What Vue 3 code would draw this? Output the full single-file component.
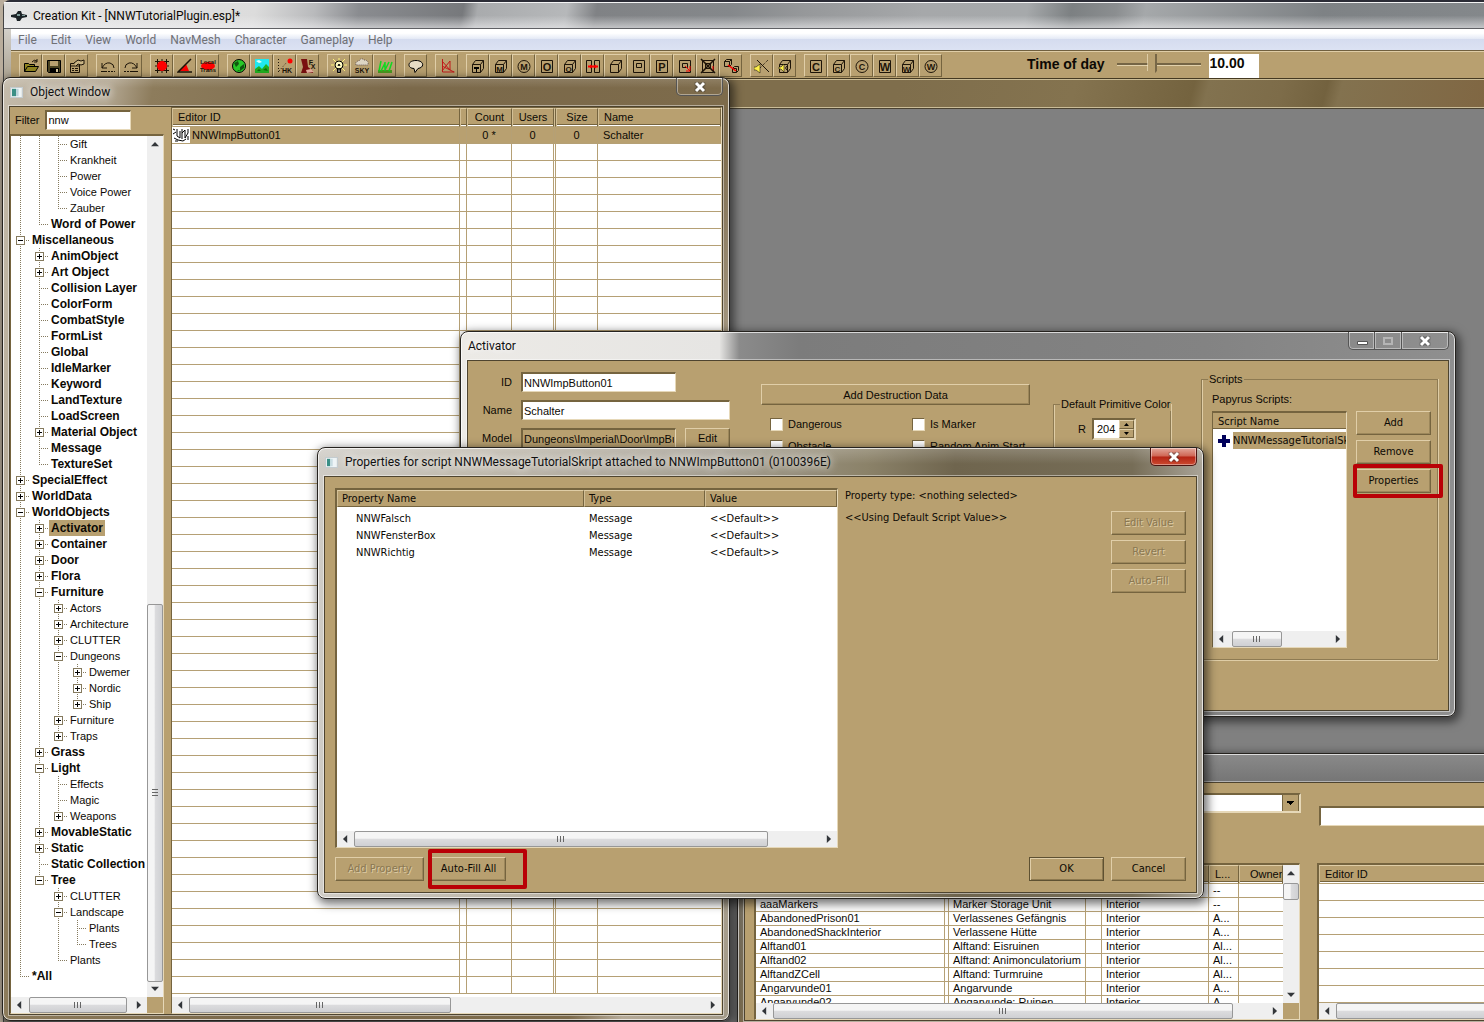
<script setup>
import { h } from 'vue'

const menus = ['File', 'Edit', 'View', 'World', 'NavMesh', 'Character', 'Gameplay', 'Help']

const cube = '<path class="k" d="M2.5 6.5h8v8h-8zM2.5 6.5l3-4h8l-3 4M13.5 2.5v8l-3 4"/>'
const square = '<path class="k" d="M2.5 2.5h11v12h-11z"/>'
const circle = '<circle class="k" cx="8" cy="8.500" r="6"/>'
const cubeLetter = (c) => cube + `<text x="6.500" y="13.500" font-size="8">${c}</text>`
const squareLetter = (c) => square + `<text x="8" y="12.500" font-size="11">${c}</text>`
const circleLetter = (c) => circle + `<text x="8" y="11.500" font-size="9">${c}</text>`

const toolGroups = [
  [
    { name: 'Open', art: '<path fill="#8f8420" stroke="#000" d="M1.500 13.500v-8h4l1 1h5v2M1.500 13.500l3-5h11l-3 5z"/><path class="k" d="M9 4q2-3 5-1M14 1v3h-3"/>' },
    { name: 'Save', art: '<path fill="#4a4322" stroke="#000" d="M1.500 2.500h13v12h-12l-1-1z"/><path fill="#b8a070" d="M4 3h8v5H4z"/><path fill="#000" d="M4 10h9v5H4z"/><path fill="#d8c8a0" d="M10 11h2v3h-2z"/>' },
    { name: 'Preferences', art: '<path class="k" d="M1.500 5.500h9v9h-9zM1.500 8h9M3 10.500h2M6 10.500h3M3 12.500h2M6 12.500h3"/><path fill="#c9b484" stroke="#1d1408" d="M5 5l4-3 3 1 3-1v4l-3 1-3-1-2 2"/>' }
  ],
  [
    { name: 'Undo', art: '<path class="k" d="M2 5v5h5M2 10q3-6 8-5 4 1 4 5"/><path class="k" stroke-dasharray="2 1" d="M5 13.500h10"/><path class="k" d="M1 13.500h6"/>' },
    { name: 'Redo', art: '<path class="k" d="M14 5v5h-5M14 10q-3-6-8-5-4 1-4 5"/><path class="k" stroke-dasharray="2 1" d="M1 13.500h8"/><path class="k" d="M8 13.500h7"/>' }
  ],
  [
    { name: 'Snap to grid', art: '<path class="k" d="M3.500 1v14M12.500 1v14M1 3.500h14M1 12.500h14M8 1v14M1 8h14"/><circle cx="8" cy="8" r="5" fill="#f00"/>' },
    { name: 'Snap to angle', art: '<path fill="#f00" d="M2 13L9 6l3 7z"/><path class="k" stroke-width="1.500" d="M14 1L1 14h14"/>' },
    { name: 'Local transform', art: '<ellipse cx="8" cy="8" rx="7" ry="4" fill="#f00"/><text x="8" y="6" font-size="6">Local</text><text x="8" y="14" font-size="6">Trans</text>' }
  ],
  [
    { name: 'World', art: '<circle cx="8" cy="8" r="6.500" fill="#28c828" stroke="#000"/><path d="M3 5l4-2 1 3-3 3zM9 9l4-3v4l-4 3zM6 13l2-1 1 1z" fill="#105810"/>' },
    { name: 'Landscape', art: '<path fill="#20e8f0" d="M1 1h14v14H1z"/><path fill="#e0fff8" d="M2 3l3-1 3 2-3 1z"/><path fill="#20b020" d="M1 11l4-3 3 3 4-5 3 3v6H1z"/><path fill="#106810" d="M3 13l2-2 2 2zM9 12l3-2 2 3z"/>' },
    { name: 'Havok', art: '<path class="k" stroke-dasharray="1 2" d="M1.500 1v14M2 13l8-9"/><circle cx="13" cy="3" r="2.500" fill="#f00"/><text x="10" y="14.500" font-size="7">HK</text>' },
    { name: 'Effects', art: '<path fill="#7a1010" d="M1 1h6l1 8 5 4v2H1l2-6z"/><path fill="#e8b0a0" d="M6 12l5-1 3 3-7 1z"/><text x="11" y="6.500" font-size="7">F</text><text x="13" y="11" font-size="7">X</text>' }
  ],
  [
    { name: 'Light', art: '<path stroke="#fff47a" fill="none" d="M8 0v16M0 7h16M2 1l12 12M14 1L2 13"/><circle cx="8" cy="7" r="4" fill="#fffac0" stroke="#000"/><path fill="#777" stroke="#000" d="M6.500 11h3v3.500h-3zM7 8l1-2 1 2"/>' },
    { name: 'Sky', art: '<path fill="#ddd5c4" stroke="#655" stroke-dasharray="1 1" d="M2 7q-1-4 3-4 2-4 5-1 5 0 4 5z"/><text x="8" y="15" font-size="7">SKY</text>' },
    { name: 'Grass', art: '<path fill="#4a9a20" d="M1 12h14v3H1z"/><path stroke="#10d820" fill="none" stroke-width="1.500" d="M2 13l2-10M4 13l4-8M8 13V4M8 12l4-8M12 13l3-9"/>' }
  ],
  [{ name: 'Dialogue', art: '<path fill="#e8dcc4" stroke="#000" d="M8 2.500c-9 0-9 8-2 8l1 4 3-4c7-1 6-8-2-8z"/>' }],
  [{ name: 'Navmesh', art: '<path fill="none" stroke="#c01818" d="M3.500 1v13h12M3 8l12 6M3 13L11 3v9M3 3l8 9"/>' }],
  [
    { name: 'Triggers', art: cube + '<path fill="#000" d="M4 9h5v2H7v3H6v-3H4z"/>' },
    { name: 'Multibound', art: cubeLetter('M') },
    { name: 'Marker sphere', art: circleLetter('M') },
    { name: 'Occlusion plane', art: squareLetter('O') },
    { name: 'Occlusion cube', art: cubeLetter('O') },
    { name: 'Portal link', art: '<path class="k" d="M1.500 2.500h5v12h-5zM9.500 2.500h5v12h-5z"/><path stroke="#f00" stroke-width="2" d="M3 8.500h10"/><path fill="#f00" d="M5 6.500v4l3-2zM11 6.500v4l-3-2z"/>' },
    { name: 'Room bound', art: cube },
    { name: 'Plane', art: square + '<path class="k" d="M5.500 5.500h5v4h-5z"/>' },
    { name: 'Portal', art: squareLetter('P') },
    { name: 'Link plane', art: square + '<path class="k" d="M5.500 5.500h5v4h-5z"/><path fill="none" stroke="#f00" d="M8 8l5 5M13 8v5H9"/>' },
    { name: 'Unlink plane', art: square + '<path class="k" d="M5.500 5.500h5v5h-5z"/><path fill="none" stroke="#f00" d="M8 8l5 5M13 8v5"/><path class="k" stroke-width="1.500" d="M1 1l14 14M15 1L1 15"/>' },
    { name: 'Link cubes', art: '<path class="k" d="M1.500 3.500h5v5h-5zM1.500 3.500l2-2h5l-2 2M8.500 1.500v5l-2 2M9.500 10.500h4v4h-4zM9.500 10.500l2-2h4v4l-2 2"/><path stroke="#f00" stroke-width="1.500" d="M5 7l8 6"/>' }
  ],
  [
    { name: 'Sound plane', art: '<path class="k" d="M3 2l12 12"/><path class="k" stroke-dasharray="1 1" d="M14 2L5 11"/><path fill="#fff04a" stroke="#000" stroke-width=".5" d="M0 9h2l4-3v9l-4-3H0z"/>' },
    { name: 'Sound cube', art: cube + '<path fill="#fff04a" stroke="#000" stroke-width=".5" d="M2 9h2l3-3v8l-3-3H2z"/><path class="k" d="M10 8q-3 2 0 4"/>' }
  ],
  [
    { name: 'Collision plane', art: squareLetter('C') },
    { name: 'Collision cube', art: cubeLetter('C') },
    { name: 'Collision sphere', art: circleLetter('C') },
    { name: 'Water plane', art: squareLetter('W') },
    { name: 'Water cube', art: cubeLetter('W') },
    { name: 'Water sphere', art: circleLetter('W') }
  ]
]

// Each line: depth, expander sign, label
const outline = `2 Gift
2 Krankheit
2 Power
2 Voice Power
2 Zauber
1 Word of Power
0-Miscellaneous
1+AnimObject
1+Art Object
1 Collision Layer
1 ColorForm
1 CombatStyle
1 FormList
1 Global
1 IdleMarker
1 Keyword
1 LandTexture
1 LoadScreen
1+Material Object
1 Message
1 TextureSet
0+SpecialEffect
0+WorldData
0-WorldObjects
1+Activator
1+Container
1+Door
1+Flora
1-Furniture
2+Actors
2+Architecture
2+CLUTTER
2-Dungeons
3+Dwemer
3+Nordic
3+Ship
2+Furniture
2+Traps
1+Grass
1-Light
2 Effects
2 Magic
2+Weapons
1+MovableStatic
1+Static
1 Static Collection
1-Tree
2+CLUTTER
2-Landscape
3 Plants
3 Trees
2 Plants
0 *All`.split('\n').map((s) => ({ depth: +s[0], sign: s[1].trim(), label: s.slice(2) }))

function continues(i, level) {
  for (let j = i + 1; j < outline.length; j++) {
    if (outline[j].depth < level) return false
    if (outline[j].depth === level) return true
  }
  return false
}

const tree = outline.map((n, i) => {
  let d = ''
  for (let l = 0; l < n.depth; l++) if (continues(i, l)) d += `M${9 + 19 * l}.5 0V16`
  const x = 9 + 19 * n.depth
  d += `M${x}.5 0V${continues(i, n.depth) ? 16 : 8}M${x} 8.5H${x + 10}`
  return { ...n, d, x, bold: n.depth < 2, selected: n.label === 'Activator' }
})

const properties = ['NNWFalsch', 'NNWFensterBox', 'NNWRichtig']

const cells = [
  ['', '', '--'],
  ['aaaMarkers', 'Marker Storage Unit', '--'],
  ['AbandonedPrison01', 'Verlassenes Gefängnis', 'A...'],
  ['AbandonedShackInterior', 'Verlassene Hütte', 'A...'],
  ['Alftand01', 'Alftand: Eisruinen', 'Al...'],
  ['Alftand02', 'Alftand: Animonculatorium', 'Al...'],
  ['AlftandZCell', 'Alftand: Turmruine', 'Al...'],
  ['Angarvunde01', 'Angarvunde', 'A...'],
  ['Angarvunde02', 'Angarvunde: Ruinen', 'A...']
]

const ScrollBar = (p) => {
  const side = p.vertical ? 'top' : 'left'
  const extent = p.vertical ? 'height' : 'width'
  return h('div', { class: ['sb', p.vertical ? 'sb-v' : 'sb-h'] }, [
    h('i', { class: 'sb-arrow back' }),
    h('div', { class: 'sb-track' }, [
      h('div', { class: 'sb-thumb', style: { [side]: p.start + '%', [extent]: p.size + '%' } }, p.plain ? [] : [h('b')])
    ]),
    h('i', { class: 'sb-arrow' })
  ])
}
ScrollBar.props = ['vertical', 'start', 'size', 'plain']
</script>

<template>
  <div class="desktop">
    <main class="kit">
      <header class="kit-title">
        <svg width="16" height="12" viewBox="0 0 16 12"><path fill="#1b2226" d="M0 5l5-1 2-3h3l1 3 5 1v2l-5 1-2 3H6L5 8 0 7z" /><path fill="#7d9a98" d="M6 4h3v2H6zM11 5h3v1h-3z" /></svg>
        <span>Creation Kit - [NNWTutorialPlugin.esp]*</span>
      </header>
      <nav class="menu"><a v-for="m in menus" :key="m" href="#">{{ m }}</a></nav>
      <div class="toolbar">
        <div v-for="(g, i) in toolGroups" :key="i" class="tools">
          <button v-for="t in g" :key="t.name" class="tool" :aria-label="t.name">
            <svg class="art" width="16" height="16" viewBox="0 0 16 16" v-html="t.art"></svg>
          </button>
        </div>
        <label class="tod" for="tod">Time of day</label>
        <input id="tod" class="slider" type="range" min="0" max="24" value="10" />
        <input class="tod-value" value="10.00" aria-label="Hour" />
      </div>
      <section class="render"><header class="render-title"></header></section>
    </main>

    <section class="win cellview">
      <header class="title"></header>
      <div class="client cell-client">
        <div class="cell-left">
          <div class="cell-top"><select class="combo" aria-label="World space"><option></option></select></div>
          <div class="box">
            <div class="box-row">
              <div class="clip">
                <table class="grid small">
                  <colgroup><col class="c189" /><col class="c4" /><col class="c137" /><col class="c16" /><col class="c107" /><col class="c30" /><col /></colgroup>
                  <thead><tr><th></th><th></th><th></th><th></th><th></th><th>L...</th><th class="own">Owner</th></tr></thead>
                  <tbody>
                    <tr v-for="(c, i) in cells" :key="i"><td>{{ c[0] }}</td><td></td><td>{{ c[1] }}</td><td></td><td>Interior</td><td>{{ c[2] }}</td><td></td></tr>
                  </tbody>
                </table>
              </div>
              <ScrollBar :vertical="true" :start="1" :size="14" :plain="true" />
            </div>
            <div class="box-foot"><ScrollBar :start="0" :size="93" /><i class="corner"></i></div>
          </div>
        </div>
        <div class="cell-right">
          <div class="cell-top second"><input class="field" aria-label="Cell" /></div>
          <div class="box">
            <div class="clip">
              <table class="grid">
                <thead><tr><th>Editor ID</th></tr></thead>
                <tbody><tr v-for="n in 8" :key="n"><td></td></tr></tbody>
              </table>
            </div>
            <ScrollBar :start="0" :size="96" />
          </div>
        </div>
      </div>
    </section>

    <section class="win objects">
      <header class="title">
        <svg class="app" width="13" height="11" viewBox="0 0 13 11"><path fill="#eef4f6" d="M0 0h13v11H0z" /><path fill="#3a8f86" d="M1 1h5v9H1z" /><path fill="#b9d3da" d="M6 1h3v9H6z" /></svg>
        <span>Object Window</span>
        <button class="cap single" aria-label="Close"><svg width="12" height="10" viewBox="0 0 12 10"><path class="x" d="M2 1l8 8M10 1L2 9" /></svg></button>
      </header>
      <div class="client obj-client">
        <aside class="side">
          <div class="filter"><label for="filter">Filter</label><input id="filter" class="field" value="nnw" /></div>
          <div class="box tree-box">
            <div class="box-row">
              <ul class="tree">
                <li v-for="(n, i) in tree" :key="i" :class="{ bold: n.bold }">
                  <svg :width="19 * (n.depth + 1)" height="16">
                    <path class="dots" :d="n.d" />
                    <g v-if="n.sign" class="exp">
                      <rect :x="n.x - 4 + 0.5" y="4.5" width="8" height="8" />
                      <path :d="`M${n.x - 2} 8.5h5` + (n.sign === '+' ? `M${n.x + 0.5} 6v5` : '')" />
                    </g>
                  </svg>
                  <span :class="{ sel: n.selected }">{{ n.label }}</span>
                </li>
              </ul>
              <ScrollBar :vertical="true" :start="54.500" :size="45.500" />
            </div>
            <div class="box-foot"><ScrollBar :start="1" :size="94" /><i class="corner"></i></div>
          </div>
        </aside>
        <div class="box list">
          <div class="clip">
            <table class="grid">
              <colgroup><col class="c288" /><col class="c7" /><col class="c45" /><col class="c42" /><col class="c2" /><col class="c42" /><col /></colgroup>
              <thead><tr><th>Editor ID</th><th></th><th class="mid">Count</th><th class="mid">Users</th><th></th><th class="mid">Size</th><th>Name</th></tr></thead>
              <tbody>
                <tr class="picked">
                  <td class="id"><svg width="18" height="16" viewBox="0 0 18 16"><path fill="#fff" d="M0 0h18v16H0z" /><path fill="none" stroke="#000" d="M1 2l2 1M1 7l3-2M5 2v7l3 2V4M10 2v10M10 6l3-3v8l3-5V2M2 11l4 2 5 1 3-2M16 9v4M3 14h3" /></svg>NNWImpButton01</td>
                  <td></td><td class="mid">0 *</td><td class="mid">0</td><td></td><td class="mid">0</td><td>Schalter</td>
                </tr>
                <tr v-for="n in 50" :key="n"><td></td><td></td><td></td><td></td><td></td><td></td><td></td></tr>
              </tbody>
            </table>
          </div>
          <ScrollBar :start="0" :size="50.500" />
        </div>
      </div>
    </section>

    <section class="win activator">
      <header class="title">
        <span>Activator</span>
        <div class="caps">
          <button class="cap" aria-label="Minimize"><svg width="12" height="10" viewBox="0 0 12 10"><path fill="#fff" stroke="#555" d="M1.500 5.500h10v3h-10z" /></svg></button>
          <button class="cap" aria-label="Maximize"><svg width="12" height="10" viewBox="0 0 12 10"><path fill="none" stroke="#b5b5b5" stroke-width="2" d="M2 2h8v6H2z" /></svg></button>
          <button class="cap wide" aria-label="Close"><svg width="12" height="10" viewBox="0 0 12 10"><path class="x" d="M2 1l8 8M10 1L2 9" /></svg></button>
        </div>
      </header>
      <div class="client act-client">
        <div class="form">
          <label for="aid">ID</label><input id="aid" class="field" value="NNWImpButton01" />
          <label for="aname">Name</label><input id="aname" class="field full" value="Schalter" />
          <label for="amodel">Model</label><input id="amodel" class="field tan" value="Dungeons\Imperial\Door\ImpButton" readonly />
          <button class="btn">Edit</button>
        </div>
        <div class="middle">
          <button class="btn">Add Destruction Data</button>
          <div class="checks">
            <label><input type="checkbox" />Dangerous</label>
            <label><input type="checkbox" />Is Marker</label>
            <label><input type="checkbox" />Obstacle</label>
            <label><input type="checkbox" />Random Anim Start</label>
          </div>
        </div>
        <fieldset class="group color">
          <legend>Default Primitive Color</legend>
          <div class="spin"><label for="red">R</label>
            <div class="spinner"><input id="red" value="204" /><div class="steps"><button aria-label="Up"><i class="up"></i></button><button aria-label="Down"><i class="down"></i></button></div></div>
          </div>
        </fieldset>
        <fieldset class="group scripts">
          <legend>Scripts</legend>
          <p>Papyrus Scripts:</p>
          <div class="scripts-row">
            <div class="box script-box">
              <div class="clip">
                <div class="list-head">Script Name</div>
                <div class="script"><svg width="12" height="12" viewBox="0 0 12 12"><path fill="#00005a" d="M4 0h4v4h4v4H8v4H4V8H0V4h4z" /></svg><span>NNWMessageTutorialSkript</span></div>
              </div>
              <ScrollBar :start="2" :size="49" />
            </div>
            <div class="stack">
              <button class="btn">Add</button>
              <button class="btn">Remove</button>
              <div class="marked"><button class="btn">Properties</button><i class="mark mark-a"></i></div>
            </div>
          </div>
        </fieldset>
      </div>
    </section>

    <section class="win props">
      <header class="title">
        <svg class="app" width="13" height="11" viewBox="0 0 13 11"><path fill="#eef4f6" d="M0 0h13v11H0z" /><path fill="#3a8f86" d="M1 1h4v9H1z" /><path fill="#c9dde2" d="M5 1h3v9H5z" /></svg>
        <span>Properties for script NNWMessageTutorialSkript attached to NNWImpButton01 (0100396E)</span>
        <button class="cap single red" aria-label="Close"><svg width="12" height="10" viewBox="0 0 12 10"><path class="x" d="M2 1l8 8M10 1L2 9" /></svg></button>
      </header>
      <div class="client props-client">
        <div class="props-body">
          <div class="box props-box">
            <div class="clip">
              <table class="grid plain">
                <colgroup><col class="c247" /><col class="c121" /><col /></colgroup>
                <thead><tr><th>Property Name</th><th>Type</th><th>Value</th></tr></thead>
                <tbody><tr v-for="p in properties" :key="p"><td class="indent">{{ p }}</td><td>Message</td><td>&lt;&lt;Default&gt;&gt;</td></tr></tbody>
              </table>
            </div>
            <ScrollBar :start="0" :size="88.500" />
          </div>
          <div class="detail">
            <p>Property type: &lt;nothing selected&gt;</p>
            <div class="detail-row">
              <p>&lt;&lt;Using Default Script Value&gt;&gt;</p>
              <div class="stack">
                <button class="btn" disabled>Edit Value</button>
                <button class="btn" disabled>Revert</button>
                <button class="btn" disabled>Auto-Fill</button>
              </div>
            </div>
          </div>
        </div>
        <footer class="actions">
          <button class="btn add" disabled>Add Property</button>
          <div class="marked"><button class="btn">Auto-Fill All</button><i class="mark mark-b"></i></div>
          <button class="btn ok">OK</button>
          <button class="btn">Cancel</button>
        </footer>
      </div>
    </section>
  </div>
</template>

<style>
html, body { margin: 0; overflow: hidden; }
</style>

<style scoped>
* { box-sizing: border-box; }
.desktop {
  position: relative; height: 100vh; overflow: hidden; background: #b9ad9c;
  font: 11px/14px "Liberation Sans", Arial, sans-serif; color: #0c0904;
}
button, input, select { font: inherit; color: inherit; margin: 0; padding: 0; border: 0; border-radius: 0; outline: 0; background: none; }
p { margin: 0; }

/* main frame */
.kit { margin-left: 3px; height: 100%; padding-left: 7px; display: flex; flex-direction: column; border-top: 2px solid #2b2c36; border-left: 1px solid #444; border-top-left-radius: 7px; background: linear-gradient(#e8e8e8, #a9a08e 80px, #8b8474); }
.kit-title {
  height: 27px; flex: none; display: flex; align-items: center; gap: 6px; margin-left: -7px; padding-left: 7px;
  border-top: 1px solid #f4f4f4; border-bottom: 1px solid #5f6064;
  font: 12px/16px Roboto, "Open Sans", sans-serif;
  background: linear-gradient(transparent 50%, rgba(240, 240, 242, .6)),
    linear-gradient(100deg, #e4e4e4 0, #dcdcdc 17%, #b9babc 21%, #8a8c90 24%, #77797c 31%, #a9abad 32%, #b6b8ba 38%, #808285 40%, #85888b 49%, #96989a 54%, #a6a8aa 62%, #a6a9ab 69%, #7c8082 72%, #8b8e90 75%, #a5a8aa 77%, #7e8285 89%, #84888b 100%);
}
.menu { height: 21px; flex: none; display: flex; gap: 14px; align-items: center; padding-left: 7px; background: linear-gradient(#fff 20%, #e6ebf6 45%, #d5dcef 50%, #dce2f3); }
.menu a { font: 12px/16px Roboto, "Open Sans", sans-serif; color: #6f7075; text-decoration: none; }
.toolbar { height: 29px; flex: none; display: flex; align-items: flex-start; gap: 8px; padding: 3px 0 0 8px; background: #b8a070; border-top: 1px solid #70603f; border-bottom: 1px solid #453a22; box-shadow: inset 0 1px #dfcda6; }
.tools { display: flex; }
.tool { width: 23px; height: 23px; display: grid; place-items: center; border: 1px solid; border-color: #e0cea8 #75643f #75643f #e0cea8; background: #b8a070; }
.art :deep(.k) { fill: none; stroke: #1d1408; }
.art :deep(text) { font-weight: 700; text-anchor: middle; fill: #1d1408; }
.tod { margin-left: 77px; font: bold 14px/20px "Liberation Sans", Arial, sans-serif; }
.slider { appearance: none; width: 84px; height: 22px; margin-left: 4px; background: linear-gradient(#756545 0 2px, #e2d1ab 2px 3px) 0 9px / 100% 3px no-repeat; }
.slider::-webkit-slider-thumb { appearance: none; width: 10px; height: 22px; background: linear-gradient(90deg, #f3e6c6 0 1px, #b8a070 1px 8px, #776747 8px); clip-path: polygon(0 0, 100% 0, 100% 75%, 50% 100%, 0 75%); }
.tod-value { width: 50px; height: 24px; padding: 0 1px 6px; background: #fff; font: bold 14px/18px "Liberation Sans", Arial, sans-serif; }
.render { flex: 1; background: #808080; }
.render-title { height: 30px; border-top: 1px solid #cbbd98; border-bottom: 1px solid #4a4232; box-shadow: inset 0 -1px #cbbd98; background: linear-gradient(105deg, #7f6e4c 60%, #84734f 72%, #74633f 80%, #82724f 81%, #7d6c49 86%, #73623f 89%, #83724f 90%, #806743 100%); }

/* windows */
.win { position: absolute; display: flex; flex-direction: column; padding: 0 6px 5px; border: 1px solid #25221e; border-radius: 8px; box-shadow: inset 0 0 0 1px rgba(255, 255, 255, .7), 2px 3px 10px 2px rgba(0, 0, 0, .55); }
.title { flex: none; height: 28px; display: flex; align-items: center; gap: 7px; padding-left: 1px; font: 12px/16px Roboto, "Open Sans", sans-serif; color: #101010; white-space: nowrap; }
.title span { text-shadow: 0 0 8px #fff, 0 0 10px rgba(255, 255, 255, .8); }
.client { flex: 1; min-height: 0; border: 1px solid #4e442f; background: #b8a070; box-shadow: 0 0 0 1px rgba(255, 255, 255, .45); }
.app { border: 1px solid #c4ccd0; }
.cap { height: 18px; width: 27px; display: grid; place-items: center; border: 1px solid #555; border-top: 0; box-shadow: inset 0 0 0 1px rgba(255, 255, 255, .4); }
.single, .wide { width: 47px; }
.single { margin: 0 0 auto auto; border-radius: 0 0 5px 5px; }
.caps { display: flex; margin: 0 0 auto auto; }
.caps .cap + .cap { border-left: 0; }
.cap:first-child { border-bottom-left-radius: 5px; }
.wide { border-bottom-right-radius: 5px; }
.cap .x { stroke: #fff; stroke-width: 3; fill: none; filter: drop-shadow(0 0 1px #222); }
.cap.red { border-color: #4c1410; background: linear-gradient(#e3a79a, #cf6553 48%, #b52414 52%, #cb4a30); }

/* sunken box and grid */
.box { display: flex; flex-direction: column; min-width: 0; min-height: 0; background: #fff; border: 2px solid #75643f; border-right: 1px solid #e6d8b8; border-bottom: 1px solid #e6d8b8; }
.box-row { flex: 1; display: flex; min-height: 0; }
.clip { flex: 1; min-width: 0; min-height: 0; overflow: hidden; }
.box-foot { display: flex; flex: none; }
.box-foot > .sb { flex: 1; }
.corner { width: 16px; background: #b8a070; }
.grid { width: 100%; table-layout: fixed; border-collapse: separate; border-spacing: 0; }
.grid th { height: 19px; padding: 0 5px; line-height: 15px; font-weight: 400; text-align: left; background: linear-gradient(#b8a070 0 15px, #75643f 15px 16px, #fff 16px); border: 1px solid; border-color: #dfcda6 #75643f #b5a075 #d2bf96; overflow: hidden; white-space: nowrap; }
.grid td { height: 17px; padding: 0 5px; line-height: 16px; border-right: 1px solid #b5a075; border-bottom: 1px solid #b5a075; overflow: hidden; white-space: nowrap; }
.grid td:last-child { border-right: 0; }
.grid .mid { text-align: center; padding: 0; }
.picked td { background: #b8a070; }
.grid .id { padding-left: 0; }
.id svg { vertical-align: middle; margin-right: 2px; height: 16px; margin-top: -2px; }
.small td { height: 14px; line-height: 13px; padding: 0 4px; }
.grid th.own { text-align: center; padding: 0 0 0 10px; }
.plain th, .plain td { font-family: "DejaVu Sans Condensed", "DejaVu Sans", sans-serif; }
.grid.plain th { height: 17px; padding: 0 4px; background: #b8a070; border-color: #dfcda6 #75643f #75643f #d2bf96; }
.plain td { border: 0; }
.plain tbody tr:first-child td { padding-top: 4px; }
.plain td.indent { padding-left: 19px; }
.c2 { width: 2px; } .c4 { width: 4px; } .c7 { width: 7px; } .c16 { width: 16px; } .c30 { width: 30px; } .c42 { width: 42px; }
.c45 { width: 45px; } .c107 { width: 107px; } .c121 { width: 121px; } .c137 { width: 137px; } .c189 { width: 189px; } .c247 { width: 247px; } .c288 { width: 288px; }
.grid th:empty, .grid td:empty { padding: 0; }

/* scroll bars */
.sb { display: flex; flex: none; background: #efefef; }
.sb-h { height: 16px; }
.sb-v { width: 16px; flex-direction: column; }
.sb :deep(.sb-track) { flex: 1; position: relative; }
.sb :deep(.sb-thumb) { position: absolute; display: grid; place-items: center; border: 1px solid #979797; border-radius: 2px; }
.sb-h :deep(.sb-thumb) { top: 0; bottom: 0; background: linear-gradient(#f5f5f5 45%, #dcdcde 50%, #cfd0d3); }
.sb-v :deep(.sb-thumb) { left: 0; right: 0; background: linear-gradient(90deg, #f5f5f5 45%, #dcdcde 50%, #cfd0d3); }
.sb-h :deep(.sb-thumb b) { width: 8px; height: 6px; background: repeating-linear-gradient(90deg, #666 0 1px, transparent 1px 3px); }
.sb-v :deep(.sb-thumb b) { width: 6px; height: 8px; background: repeating-linear-gradient(#666 0 1px, transparent 1px 3px); }
.sb :deep(.sb-arrow) { flex: none; width: 17px; height: 16px; background: #33363a; }
.sb-h :deep(.sb-arrow) { clip-path: polygon(40% 25%, 65% 50%, 40% 75%); }
.sb-h :deep(.back) { clip-path: polygon(60% 25%, 35% 50%, 60% 75%); }
.sb-v :deep(.sb-arrow) { width: 16px; height: 17px; clip-path: polygon(25% 40%, 75% 40%, 50% 65%); }
.sb-v :deep(.back) { clip-path: polygon(25% 60%, 75% 60%, 50% 35%); }

/* controls */
.field { height: 20px; padding: 0 1px; background: #fff; border: 2px solid #75643f; border-right: 1px solid #e6d8b8; border-bottom: 1px solid #e6d8b8; }
.field.tan { background: #b8a070; }
.btn { display: block; height: 24px; border: 1px solid; border-color: #e0cea8 #75643f #75643f #e0cea8; box-shadow: inset -1px -1px #9c875b; text-align: center; }
.btn:disabled { color: #8a7852; text-shadow: 1px 1px #dccaa4; }
.stack { display: flex; flex-direction: column; gap: 5px; width: 75px; flex: none; }
.marked { position: relative; }
.marked .btn { width: 100%; }
.mark { position: absolute; border: 4px solid #b90006; border-radius: 2px; pointer-events: none; }
.mark-a { inset: -5px -12px -5px -3px; }
.mark-b { inset: -8px -21px -8px -3px; }

/* object window */
.objects { left: 2px; top: 77px; width: 728px; bottom: 1px; background: linear-gradient(rgba(255, 255, 255, .15), transparent 10px), linear-gradient(100deg, #c4bbab 0, #b3a792 12%, #8d7c5c 17%, #7b694a 45%, #7d6b4b 82%, #b5aa97 88%, #a39a88); }
.obj-client { display: flex; gap: 7px; }
.side { width: 154px; flex: none; display: flex; flex-direction: column; }
.filter { height: 27px; display: flex; align-items: center; gap: 6px; padding: 0 0 2px 5px; flex: none; }
.filter .field { width: 86px; }
.tree-box { flex: 1; border-left-width: 1px; }
.tree { flex: 1; min-width: 0; margin: 0; padding: 0; list-style: none; overflow: hidden; }
.tree li { display: flex; height: 16px; line-height: 16px; white-space: nowrap; }
.tree li svg { flex: none; display: block; }
.tree span { padding: 0 2px; }
.bold { font-weight: 700; font-size: 12px; }
.sel { background: #b8a070; }
.dots { stroke: #857a5e; stroke-dasharray: 1 1; fill: none; }
.exp rect { fill: #fff; stroke: #857a5e; }
.exp path { stroke: #000; }
.list { flex: 1; border-left-width: 1px; border-top-width: 1px; }

/* activator */
.activator { left: 460px; top: 331px; width: 996px; height: 386px; background: linear-gradient(90deg, #eceae6 0, #e6e5e3 26%, #8b8b8b 28%, #7c7c7c 34%, #838383 75%, #8f8f8f); }
.act-client { display: flex; align-items: flex-start; padding: 11px 10px 0 8px; }
.form { display: grid; grid-template-columns: 36px 155px 45px; column-gap: 9px; row-gap: 8px; width: 254px; flex: none; align-items: center; }
.form label { grid-column: 1; text-align: right; }
.form .full { grid-column: 2 / 4; }
.form .field:not(.full) { grid-column: 2; width: 155px; }
.form .btn { height: 20px; grid-column: 3; }
.middle { margin: 12px 0 0 31px; width: 269px; flex: none; }
.middle > .btn { width: 100%; height: 21px; }
.checks { display: grid; grid-template-columns: 142px 1fr; row-gap: 8px; margin: 12px 0 0 9px; white-space: nowrap; }
.checks label { display: flex; align-items: center; gap: 5px; height: 14px; }
.checks input { appearance: none; width: 13px; height: 13px; background: #fff; border: 1px solid; border-color: #75643f #e6d8b8 #e6d8b8 #75643f; }
.group { margin: 0; padding: 0; border: 1px solid #8d7a52; box-shadow: inset 1px 0 #dfcda6, 1px 0 #dfcda6, 0 1px #dfcda6; min-width: 0; }
.group legend { margin-left: 6px; padding: 0 1px; height: 14px; white-space: nowrap; }
.color { width: 118px; height: 150px; margin: 25px 0 0 23px; flex: none; }
.spin { display: flex; align-items: center; gap: 6px; padding: 7px 0 0 24px; }
.spinner { display: flex; width: 44px; height: 22px; border: 2px solid; border-color: #75643f #e6d8b8 #e6d8b8 #75643f; }
.spinner input { width: 25px; padding: 0 3px; background: #fff; }
.steps { flex: 1; display: flex; flex-direction: column; background: #b8a070; }
.steps button { flex: 1; display: grid; place-items: center; border: 1px solid; border-color: #e0cea8 #75643f #75643f #e0cea8; }
.up, .down { width: 5px; height: 3px; background: #000; clip-path: polygon(50% 0, 100% 100%, 0 100%); }
.down { clip-path: polygon(0 0, 100% 0, 50% 100%); }
.scripts { flex: 1; height: 288px; margin-left: 30px; display: flex; flex-direction: column; }
.scripts p { padding: 6px 0 5px 10px; }
.scripts-row { display: flex; gap: 9px; padding: 0 6px 0 10px; height: 237px; }
.script-box { flex: 1; border-left-width: 1px; font-family: "DejaVu Sans Condensed", "DejaVu Sans", sans-serif; }
.list-head { height: 16px; padding-left: 5px; background: #b8a070; border-bottom: 1px solid #75643f; line-height: 18px; }
.script { display: flex; align-items: center; gap: 3px; padding: 3px 0 0 5px; white-space: nowrap; }
.script svg { flex: none; }
.script span { line-height: 17px; background: #b8a070; }
.scripts .btn, .props .btn { font-family: "DejaVu Sans Condensed", "DejaVu Sans", sans-serif; }

/* script properties */
.props { left: 317px; top: 447px; width: 887px; height: 452px; background: linear-gradient(rgba(255, 255, 255, .2), transparent 16px), linear-gradient(90deg, #cfccc6 0, #c2bcb0 16%, #a59f92 45%, #8b8269 62%, #6f654e 72%, #766d57 92%, #aaa498); }
.props-client { display: flex; flex-direction: column; padding: 11px 10px 11px; font-family: "DejaVu Sans Condensed", "DejaVu Sans", sans-serif; }
.props-body { flex: 1; display: flex; gap: 7px; min-height: 0; }
.props-box { width: 503px; flex: none; }
.detail { flex: 1; padding-top: 1px; }
.detail > p { height: 22px; }
.detail-row { display: flex; justify-content: space-between; }
.actions { display: flex; align-items: center; gap: 7px; margin-top: 9px; }
.actions .btn { width: 75px; }
.actions .add { width: 89px; }
.actions .ok { margin-left: auto; border-color: #5e5132; box-shadow: inset 1px 1px #e0cea8, inset -1px -1px #8d794f; }

/* cell view */
.cellview { left: 737px; top: 753px; right: -300px; bottom: -5px; border-radius: 8px 0 0 0; background: linear-gradient(#8a8a8a, #757575 28px, #7b6c4e); }
.cell-client { display: flex; gap: 16px; padding-left: 9px; }
.cell-left { width: 547px; flex: none; display: flex; flex-direction: column; }
.cell-right { flex: 1; display: flex; flex-direction: column; }
.cell-left .box, .cell-right .box { flex: 1; }
.cell-left .box { margin-right: 1px; }
.cell-top { height: 80px; flex: none; padding-top: 10px; }
.cell-top.second { padding: 23px 0 0 2px; }
.cell-top .field { width: 100%; }
.combo { appearance: none; width: 100%; height: 20px; border: 2px solid; border-color: #75643f #e6d8b8 #e6d8b8 #75643f; background: linear-gradient(45deg, transparent 50%, #000 50%) right 9px center / 4px 4px no-repeat, linear-gradient(-45deg, transparent 50%, #000 50%) right 5px center / 4px 4px no-repeat, linear-gradient(90deg, #75643f 0 1px, #b8a070 1px 16px, #75643f 16px) right / 17px 100% no-repeat, #fff; }
</style>
